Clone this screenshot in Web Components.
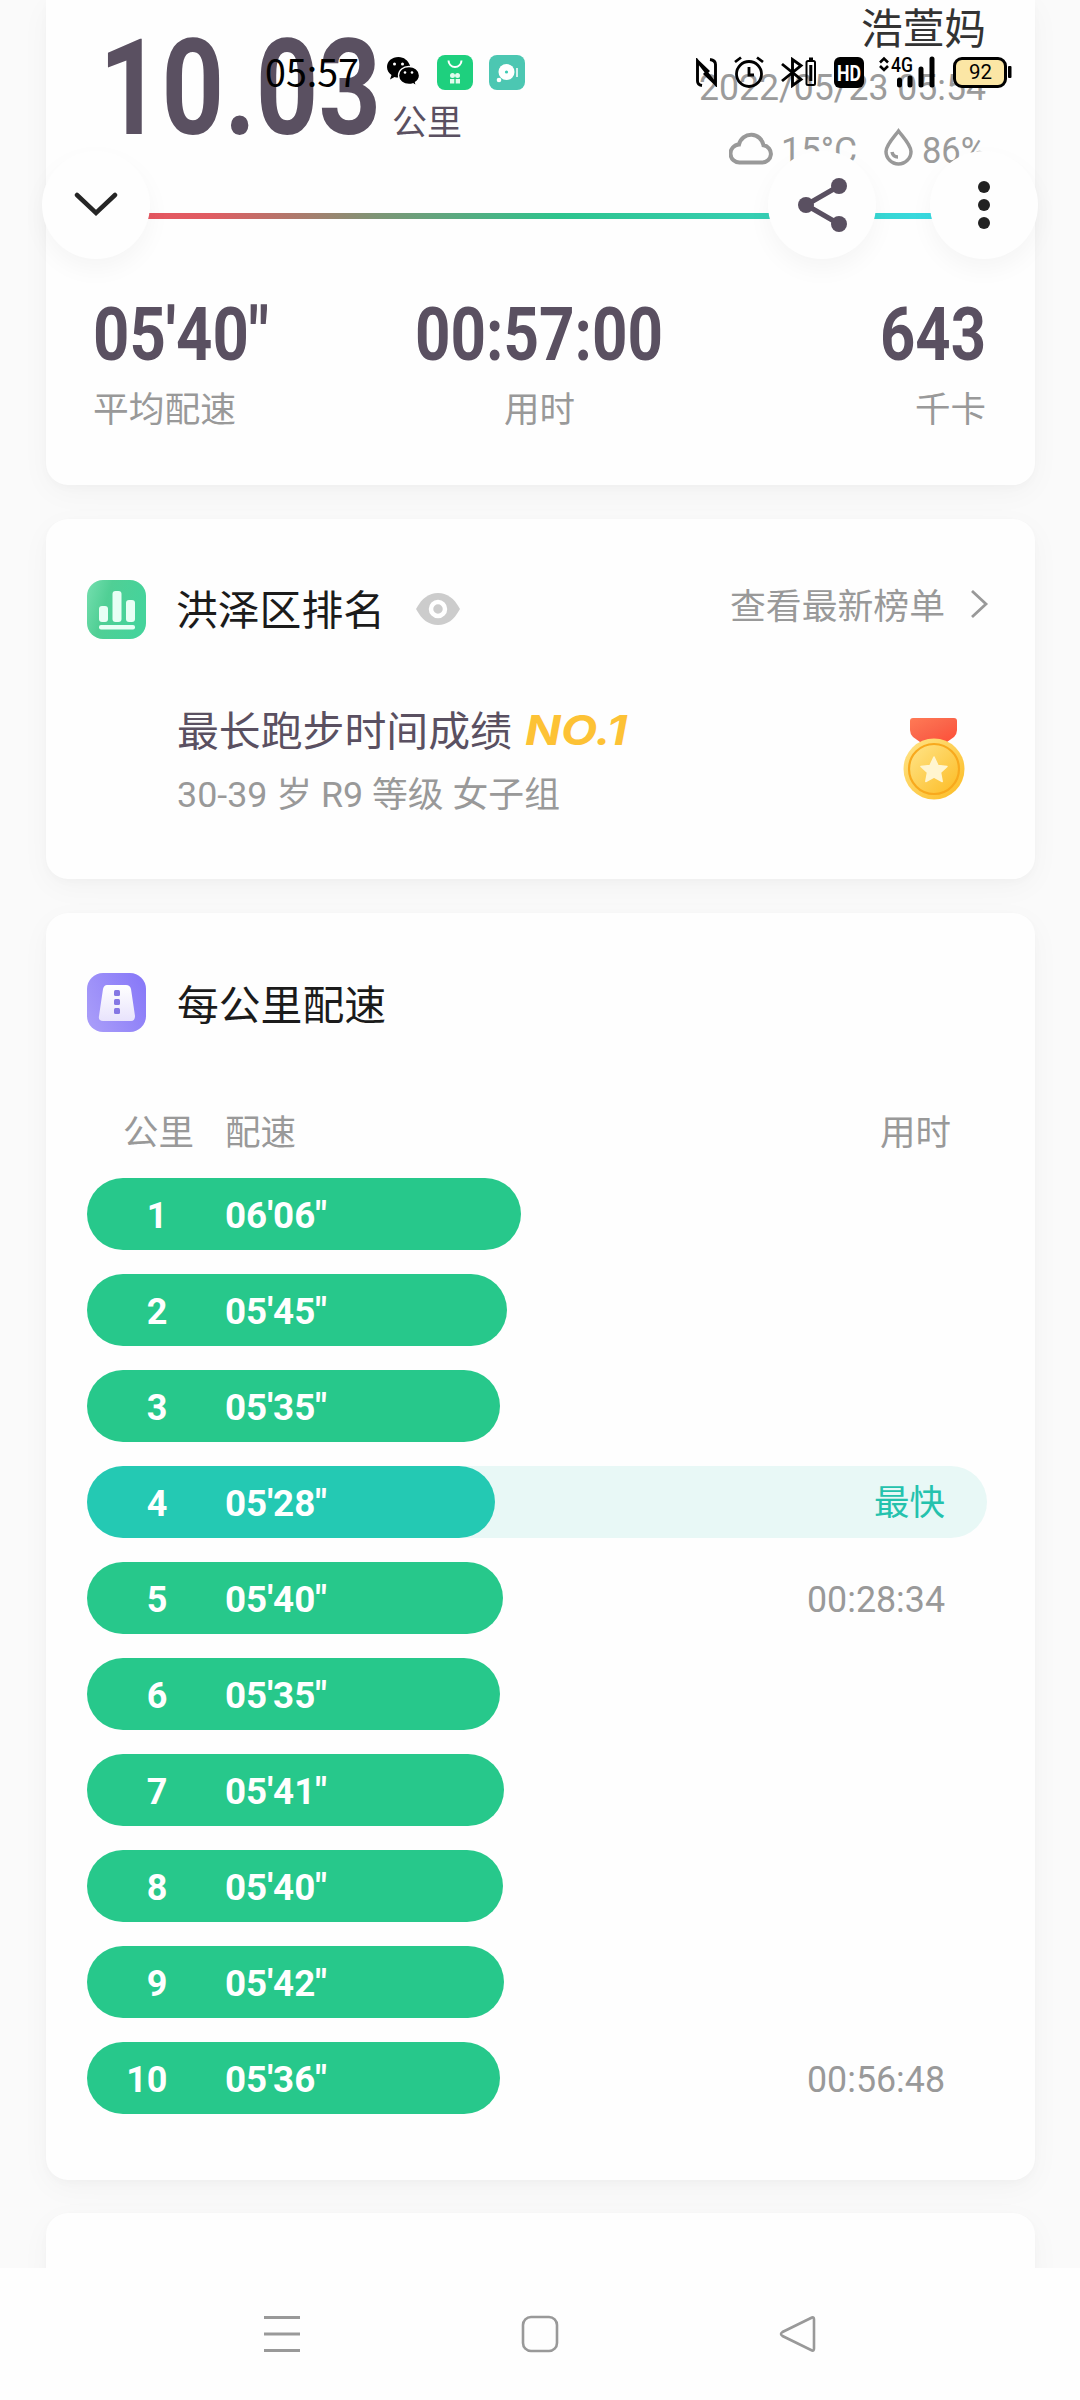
<!DOCTYPE html>
<html lang="zh-CN">
<head>
<meta charset="utf-8">
<title>跑步记录</title>
<style>
html,body{margin:0;padding:0}
body{width:1080px;height:2400px;overflow:hidden;background:#fafafa;font-family:Roboto,"Noto Sans CJK SC",sans-serif}
</style>
</head>
<body>
<run-screen></run-screen>
<script>
const define=(name,html,after)=>customElements.define(name,class extends HTMLElement{
  connectedCallback(){
    if(this.shadowRoot)return;
    const t=document.createElement('template');
    t.innerHTML=typeof html==='function'?html(this):html;
    this.attachShadow({mode:'open'}).append(t.content.cloneNode(true));
    if(after)after(this);
  }
});

/* Single line of text, stretched horizontally to a fixed width */
define('fit-text',e=>`<style>
:host{display:block;flex:none;width:${e.getAttribute('w')}px;height:${e.getAttribute('h')}px;line-height:${e.getAttribute('h')}px;font-size:${e.getAttribute('s')}px;white-space:nowrap}
span{display:inline-block;transform-origin:0 50%}
</style><span><slot></slot></span>`,e=>{
  const s=e.shadowRoot.querySelector('span');
  s.style.transform=`scaleX(${+e.getAttribute('w')/s.getBoundingClientRect().width})`;
});

define('app-card',`<style>
:host{display:block;box-sizing:border-box;flex:none;width:989px;margin-left:45.5px;border-radius:22px;background:#fefefe;box-shadow:0 8px 30px rgba(0,0,0,.035),0 3px 8px rgba(0,0,0,.02)}
</style><slot></slot>`);

define('round-button',`<style>
:host{display:flex;align-items:center;justify-content:center;width:108px;height:108px;border-radius:50%;background:#fefefe;box-shadow:0 10px 24px rgba(0,0,0,.04)}
</style><slot></slot>`);

define('status-bar',`<style>
:host{position:absolute;left:0;top:0;width:1080px;height:144px;display:block;color:#000}
.l,.r{position:absolute;display:flex;align-items:center}
.l{left:265px;top:48px;height:48px}
.r{left:695px;top:48px;height:48px}
svg{display:block;flex:none}
.b{display:flex;align-items:center;justify-content:center;box-sizing:border-box;width:54px;height:31px;border:3.500px solid #000;border-radius:9px;background:#fbe6a5}
</style>
<div class="l">
 <fit-text w="94" h="48" s="38" style="font-family:'Noto Sans CJK SC';margin-top:-2px">05:57</fit-text>
 <svg style="margin-left:28px" width="34" height="30" viewBox="0 0 34 30"><path d="M11.500 0C5 0 0 4.300 0 10c0 3.500 2 6.300 4.500 8L3 22.500l4.500-2.600c1.500.5 2.500.7 4 .6A9.500 9.500 0 0 0 23 8.500C21 3.500 17 0 11.500 0Z"/><path d="M22 9.500c-5.700 0-10.500 3.600-10.500 9s4.800 9 10.500 9c1.400 0 2.700-.2 4-.7l3.500 2.200-1-3.800c2.500-1.600 4-3.800 4-6.700 0-5.400-4.800-9-10.500-9Z" stroke="#fff" stroke-width="1.300"/><g fill="#fff"><circle cx="7.500" cy="7" r="1.500"/><circle cx="15.500" cy="7" r="1.500"/><circle cx="18" cy="15.500" r="1.300"/><circle cx="25" cy="15.500" r="1.300"/></g></svg>
 <svg style="margin-left:16px" width="36" height="35" viewBox="0 0 36 35"><rect width="36" height="35" rx="8" fill="#1ed07e"/><path d="M11.500 5.500a6.500 6.500 0 0 0 13 0" fill="none" stroke="#fff" stroke-width="2"/><g fill="#dffcec"><circle cx="15.500" cy="20.500" r="2.500"/><circle cx="20.500" cy="20.500" r="2.500"/><rect x="13" y="24" width="4.300" height="4.500"/><rect x="18.700" y="24" width="4.300" height="4.500"/></g></svg>
 <svg style="margin-left:16px" width="36" height="35" viewBox="0 0 36 35"><rect width="36" height="35" rx="8" fill="#4cc7b2"/><circle cx="17.500" cy="17" r="8" fill="#fff"/><circle cx="17.500" cy="17" r="1.600" fill="#3ccbb4"/><circle cx="10" cy="25" r="2.300" fill="#fff"/><path d="M28 13v9" stroke="#fff" stroke-width="1.500"/></svg>
</div>
<div class="r">
 <svg width="24" height="29" viewBox="0 0 24 29"><path d="M7 27.500C4 27 2.500 26 2.500 23V3L20.500 26V6.500C20.500 3.500 19 2 15 1.500M2.500 3 14 14M20.500 26 9 15" fill="none" stroke="#000" stroke-width="2.900"/></svg>
 <svg style="margin-left:15px" width="30" height="32" viewBox="0 0 30 32"><g fill="none" stroke="#000" stroke-width="2.800"><circle cx="15" cy="18" r="12.500"/><path d="M15 11v8h5M1 6l6-4.500M29 6l-6-4.500"/></g></svg>
 <svg style="margin-left:17px" width="36" height="31" viewBox="0 0 36 31"><path d="M1 7l19 15.500-8.500 6V2.500l8.500 6L1 24" fill="none" stroke="#000" stroke-width="2.900"/><rect x="25.500" y="4" width="8.500" height="24" rx="1.500" fill="none" stroke="#000" stroke-width="2"/><path d="M28 2h4M29.800 8v16" stroke="#000" stroke-width="3"/></svg>
 <svg style="margin-left:17px" width="30" height="31" viewBox="0 0 30 31"><rect width="30" height="31" rx="6"/><text x="3" y="23.500" textLength="24" lengthAdjust="spacingAndGlyphs" font-family="Roboto" font-size="22" font-weight="700" fill="#fff">HD</text></svg>
 <svg style="margin-left:15px" width="56" height="32" viewBox="0 0 56 32"><path d="M1 6.500l4-4 4 4M1 10l4 4 4-4" fill="none" stroke="#000" stroke-width="2.600"/><text x="12" y="15.500" textLength="22" lengthAdjust="spacingAndGlyphs" font-family="Roboto" font-size="19.500" font-weight="500">4G</text><path d="M20.500 29v-5M31 29v-7M42 29V13M53 29V3" stroke="#000" stroke-width="5" stroke-linecap="round"/></svg>
 <div class="b" style="margin-left:18px"><fit-text w="23" h="26" s="21">92</fit-text></div>
 <svg width="5" height="12" viewBox="0 0 5 12"><rect x="1" width="3.500" height="12" rx="1"/></svg>
</div>`);

define('run-summary',`<style>
:host{display:block;position:relative;height:485px}
svg{display:block;flex:none}
.top{display:flex;justify-content:space-between;height:213px;padding:0 49px 0 53px}
.dist{display:flex;align-items:flex-start;gap:11px;color:#5a5061}
.who{display:flex;flex-direction:column;align-items:flex-end;color:#9b9b9b}
.w{display:flex;align-items:center;height:44px;margin-top:13px}
.bar{height:6px;margin:0 49px;background:linear-gradient(90deg,#e9525f 0,#e05c62 13%,#7c9676 32%,#2dc48d 52%,#36cfb4 75%,#38ddef 100%)}
.stats{display:grid;grid-template-columns:1fr auto 1fr;padding:75px 49px 0 47.500px}
.c{display:flex;flex-direction:column;color:#999}
.n{color:#5a5061;font-weight:700}
</style>
<div class="top">
 <div class="dist"><fit-text class="n" w="282" h="160" s="134" style="margin-top:9px">10.03</fit-text><fit-text w="70" h="48" s="35" style="margin-top:100px">公里</fit-text></div>
 <div class="who"><fit-text w="125" h="56" s="42" style="color:#333;margin-top:2px">浩萱妈</fit-text><fit-text w="287" h="42" s="36" style="margin-top:9px">2022/05/23 05:54</fit-text>
 <div class="w"><svg style="margin-top:6px" width="44" height="36" viewBox="0 0 44 36"><path d="M11 33.500H33a8.700 8.700 0 0 0 1.500-17.300A12.500 12.500 0 0 0 10 15.500a9 9 0 0 0 1 18Z" fill="none" stroke="#999" stroke-width="4"/></svg><fit-text w="76" h="44" s="36" style="margin-left:8px;margin-top:13px">15°C</fit-text><svg style="margin-left:27px;margin-top:6px" width="29" height="38" viewBox="0 0 29 38"><path d="M14.500 3C10 9 2 17 2 23.500a12.500 12.500 0 0 0 25 0C27 17 19 9 14.500 3Z" fill="none" stroke="#999" stroke-width="3.500"/><path d="M8 24q1 5 6 5" fill="none" stroke="#999" stroke-width="3.500"/></svg><fit-text w="64" h="44" s="36" style="margin-left:9px;margin-top:13px">86%</fit-text></div></div>
</div>
<div class="bar"></div>
<div class="stats">
 <div class="c"><fit-text class="n" w="176" h="82" s="74">05'40"</fit-text><fit-text w="143" h="50" s="35" style="margin-top:10px">平均配速</fit-text></div>
 <div class="c" style="align-items:center"><fit-text class="n" w="248" h="82" s="74">00:57:00</fit-text><fit-text w="71" h="50" s="35" style="margin-top:10px">用时</fit-text></div>
 <div class="c" style="align-items:flex-end"><fit-text class="n" w="106" h="82" s="74">643</fit-text><fit-text w="71" h="50" s="35" style="margin-top:10px">千卡</fit-text></div>
</div>`);

define('rank-card',`<style>
:host{display:block;height:360px}
svg{display:block;flex:none}
.h{display:flex;align-items:center;padding:60px 45px 0 41.500px;height:60px}
.b{display:flex;justify-content:space-between;padding:63px 66px 0 131.500px}
.r{display:flex;align-items:center;gap:13px;color:#5a5061}
</style>
<div class="h"><svg width="59" height="59" viewBox="0 0 59 59"><defs><linearGradient id="g" x1="0" x2="1" y2=".3"><stop stop-color="#75dfaf"/><stop offset=".4" stop-color="#50cf95"/><stop offset="1" stop-color="#45d39b"/></linearGradient></defs><rect width="59" height="59" rx="16" fill="url(#g)"/><g fill="#e8fff5"><rect x="12" y="26" width="9" height="16" rx="3"/><rect x="25.500" y="11" width="9" height="31" rx="3"/><rect x="39" y="20" width="9" height="22" rx="3"/><rect x="12" y="45" width="36" height="4.500" rx="2"/></g></svg>
<fit-text w="209" h="60" s="41" style="margin-left:30px;margin-top:3px;color:#1b1b1b">洪泽区排名</fit-text>
<svg style="margin-left:30px" width="46" height="34" viewBox="0 0 46 34"><path d="M1 17C7 6 14 1 23 1s16 5 22 16c-6 11-13 16-22 16S7 28 1 17Z" fill="#ccc"/><circle cx="23" cy="17" r="7" fill="#ccc" stroke="#fff" stroke-width="4.500"/></svg>
<fit-text w="215" h="56" s="35" style="margin-left:auto;color:#999;margin-top:-2px">查看最新榜单</fit-text>
<svg style="margin-left:26px;margin-top:-8px" width="19" height="30" viewBox="0 0 19 30"><path d="M1 1l14 13L1 27" fill="none" stroke="#999" stroke-width="2.800"/></svg></div>
<div class="b"><div><div class="r"><fit-text w="335" h="60" s="41">最长跑步时间成绩</fit-text><fit-text w="102" h="52" s="41" style="margin-top:-5px;color:#fdc235;font-family:Inter,sans-serif;font-weight:700;font-style:italic">NO.1</fit-text></div><fit-text w="383" h="50" s="35" style="margin-top:9px;color:#999">30-39 岁 R9 等级 女子组</fit-text></div>
<svg style="margin-top:15px" width="70" height="84" viewBox="0 0 70 84"><defs><linearGradient id="r" x2="1" y2="1"><stop stop-color="#ff7a55"/><stop offset=".5" stop-color="#fa654a"/><stop offset="1" stop-color="#ff4e37"/></linearGradient><linearGradient id="y" x2="1" y2="1"><stop stop-color="#ffe58a"/><stop offset="1" stop-color="#fcbb22"/></linearGradient></defs><path d="M14 1h41q3 0 3 3v9q0 4-3 7l-7 5H21l-7-5q-3-3-3-7V4q0-3 3-3Z" fill="url(#r)"/><circle cx="35" cy="52" r="30.500" fill="url(#y)"/><circle cx="35" cy="52" r="25" fill="url(#y)" stroke="#f8a91d" stroke-width="2.200"/><path d="M35 40l4 8.500 9 1-6.500 6 1.700 9L35 60l-8.200 4.500 1.700-9-6.500-6 9-1Z" fill="#fff5d0" stroke="#fff5d0" stroke-width="1.500" stroke-linejoin="round"/></svg></div>`);

define('pace-row',e=>{const f=e.hasAttribute('fast');return`<style>
:host{display:flex;align-items:center;justify-content:space-between;height:72px;border-radius:36px;background:${f?'#e8f8f6':'none'}}
.p{display:flex;box-sizing:border-box;padding-top:2px;width:${e.getAttribute('len')}px;height:72px;border-radius:36px;background:${f?'#24c9b3':'#27c88b'};color:#fff;font-size:36px;font-weight:700}
.k{width:80.500px;text-align:right;line-height:72px}
.t{color:${f?'#24c2ad':'#999'};margin:${f?4:3}px 42px 0 0}
</style><div class="p"><div class="k">${e.getAttribute('km')}</div><fit-text w="102" h="72" s="36" style="margin-left:57.500px">${e.getAttribute('pace')}</fit-text></div>${e.hasAttribute('note')?`<fit-text class="t" w="${f?71:138}" h="68" s="${f?35:36}">${e.getAttribute('note')}</fit-text>`:''}`});

const rows=[["06'06″",434],["05'45″",420],["05'35″",413],["05'28″",408,'最快'],["05'40″",416,'00:28:34'],["05'35″",413],["05'41″",417],["05'40″",416],["05'42″",417],["05'36″",413,'00:56:48']];
define('pace-card',`<style>
:host{display:block;height:1267px}
svg{display:block}
.h{display:flex;align-items:center;gap:31px;padding:59px 0 0 41.500px;height:60px;color:#1b1b1b}
.c{display:flex;padding:77px 84px 0 77px;height:50px;color:#999}
.r{display:flex;flex-direction:column;gap:24px;margin:19px 47.500px 0 41.500px}
</style>
<div class="h"><svg width="59" height="59" viewBox="0 0 59 59"><defs><linearGradient id="v" x1="0" x2="1" y1=".7" y2=".2"><stop stop-color="#a79bf9"/><stop offset="1" stop-color="#8879f8"/></linearGradient><linearGradient id="w" x2="0" y2="1"><stop stop-color="#fff"/><stop offset="1" stop-color="#e8e3fc"/></linearGradient></defs><rect width="59" height="59" rx="16" fill="url(#v)"/><path d="M20 12h19q4 0 5 4l4 27q0 5-4 5H16q-5 0-4-5l4-27q1-4 4-4Z" fill="url(#w)"/><g fill="#8577e4"><rect x="27" y="17" width="6" height="6" rx="1.500"/><rect x="27" y="26" width="6" height="6" rx="1.500"/><rect x="27" y="35" width="6" height="6" rx="1.500"/></g></svg><fit-text w="209" h="60" s="41" style="margin-top:7px">每公里配速</fit-text></div>
<div class="c"><fit-text w="71" h="50" s="35">公里</fit-text><fit-text w="71" h="50" s="35" style="margin-left:31px">配速</fit-text><fit-text w="71" h="50" s="35" style="margin-left:auto">用时</fit-text></div>
<div class="r">${rows.map((r,i)=>`<pace-row km="${i+1}" pace="${r[0]}" len="${r[1]}" ${r[2]?`note="${r[2]}"`:''} ${i===3?'fast':''}></pace-row>`).join('')}</div>`);

define('nav-bar',`<style>
:host{position:absolute;left:0;top:2268px;width:1080px;height:132px;background:#fefefe;display:flex;justify-content:center;gap:220px;box-sizing:border-box;padding-top:46px}
svg{display:block}
</style>
<svg width="38" height="40" viewBox="0 0 38 40"><path d="M1 3.500h36M1 20h36M1 36.500h36" stroke="#999" stroke-width="3"/></svg>
<svg width="38" height="40" viewBox="0 0 38 40"><rect x="2" y="3" width="34" height="34" rx="8" fill="none" stroke="#999" stroke-width="2.600"/></svg>
<svg width="38" height="40" viewBox="0 0 38 40"><path d="M33 3.500 3.500 18q-3 2 0 4L33 36.500q2 .5 2-2v-29q0-2.500-2-2Z" fill="none" stroke="#999" stroke-width="2.600"/></svg>`);

define('run-screen',`<style>
:host{display:block;position:relative;width:1080px;height:2400px;overflow:hidden}
.page{display:flex;flex-direction:column;gap:34px}
.page app-card:first-child{border-radius:0 0 22px 22px}
.f{position:absolute;left:42px;right:42px;top:151px;display:flex}
</style>
<div class="page"><app-card><run-summary></run-summary></app-card><app-card><rank-card></rank-card></app-card><app-card><pace-card></pace-card></app-card><app-card style="height:200px;margin-top:-1px"></app-card></div>
<div class="f">
<round-button><svg width="44" height="28" viewBox="0 0 44 28"><path d="M3 4l19 18L41 4" fill="none" stroke="#252525" stroke-width="4.500" stroke-linecap="round"/></svg></round-button>
<round-button style="margin-left:auto"><svg width="50" height="56" viewBox="0 0 50 56"><g fill="#5a5061"><path d="M42 9 9 28l33 19" fill="none" stroke="#5a5061" stroke-width="5"/><circle cx="42" cy="9" r="8"/><circle cx="9" cy="28" r="8"/><circle cx="42" cy="47" r="8"/></g></svg></round-button>
<round-button style="margin-left:54px"><svg width="14" height="50" viewBox="0 0 14 50"><g fill="#222"><circle cx="7" cy="7" r="6"/><circle cx="7" cy="25" r="6"/><circle cx="7" cy="43" r="6"/></g></svg></round-button>
</div>
<status-bar></status-bar>
<nav-bar></nav-bar>`);
</script>
</body>
</html>
